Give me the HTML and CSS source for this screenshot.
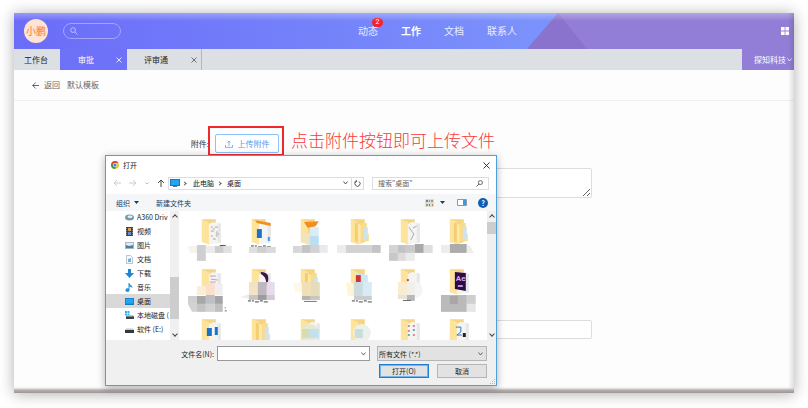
FILE: index.html
```html
<!DOCTYPE html>
<html lang="zh-CN">
<head>
<meta charset="utf-8">
<title>审批</title>
<link rel="stylesheet" href="styles.css">
</head>
<body>
<svg class="defs" aria-hidden="true">
  <defs>
    <g id="folder">
      <path d="M15 3h14v23l-6 2-8-2z" fill="#f5d583"/>
      <path d="M15 3l7 3v23l-7-4z" fill="#fee49b"/>
    </g>
    <g id="paper"><path d="M22 8l4-2 8 1v20l-12 1z" fill="#f4f4f3"/><path d="M31 7l3 1v18l-3 1z" fill="#e5e7e8"/></g>
    <g id="nested"><path d="M19 7h8l1 2v17l-5 1-4-2z" fill="#f3ce74"/><path d="M25 7h6v11h2v7l-8 1z" fill="#f8dc8b"/><path d="M28 11h4v13h-4z" fill="#cfe3ef"/><path d="M22 7l3 2v19l-3-1z" fill="#ffe7a5"/></g>
    <path id="dashes" d="M0 0h3m1 0h2m1 1h4m1-1h3m1 1h4" stroke="#444" fill="none"/>
  </defs>
</svg>

<main class="app">
  <header class="topbar">
    <svg class="topbar-art" viewBox="0 0 267 36" preserveAspectRatio="none" aria-hidden="true"><path d="M0 36L31 0H267V36z" fill="#8a73cc"/><path d="M31 0H267V36H60z" fill="#927ed6"/></svg>
    <span class="avatar">小鹏</span>
    <label class="search" aria-label="搜索">
      <svg width="8" height="8" viewBox="0 0 9 9" fill="none" stroke="#c5c7ff"><circle cx="3.5" cy="3.5" r="2.7"/><path d="M5.5 5.5l3 3"/></svg>
      <input type="search">
    </label>
    <nav class="mainnav">
      <a href="#">动态<span class="badge">2</span></a>
      <a href="#" class="on">工作</a>
      <a href="#">文档</a>
      <a href="#">联系人</a>
    </nav>
    <button class="apps" aria-label="应用"><svg width="8" height="8" viewBox="0 0 8 8" fill="#fff"><path d="M0 0h3.6v3.6H0zM4.4 0H8v3.6H4.4zM0 4.4h3.6V8H0zM4.4 4.4H8V8H4.4z"/></svg></button>
  </header>

  <div class="tabs">
    <a class="tab" href="#">工作台</a>
    <div class="tab current"><a href="#">审批</a><button aria-label="关闭"><svg width="6" height="6" viewBox="0 0 6 6" stroke="#fff" stroke-width=".8"><path d="M.5.5l5 5m0-5l-5 5"/></svg></button></div>
    <div class="tab last"><a href="#">评审通</a><button aria-label="关闭"><svg width="6" height="6" viewBox="0 0 6 6" stroke="#555" stroke-width=".8"><path d="M.5.5l5 5m0-5l-5 5"/></svg></button></div>
    <button class="company">探知科技<svg width="5" height="4" viewBox="0 0 5 4" fill="none" stroke="#fff" stroke-width=".8"><path d="M.5.5l2 2.5 2-2.5"/></svg></button>
  </div>

  <div class="crumbs">
    <a href="#"><svg width="7" height="7" viewBox="0 0 7 7" fill="none" stroke="#555" stroke-width=".9"><path d="M7 3.5H.7M3.7.5l-3 3 3 3"/></svg>返回</a>
    <span>默认模板</span>
  </div>

  <form class="form">
    <label for="upload">附件:</label>
    <div class="upload-row">
      <span class="marked"><button type="button" class="upload" id="upload"><svg width="8" height="8" viewBox="0 0 8 8" fill="none" stroke="#5aa5f5" stroke-width=".8"><path d="M.5 5v2.4h7V5M4 6V1M2.5 2.5L4 1l1.500 1.500"/></svg>上传附件</button></span>
      <span class="note">点击附件按钮即可上传文件</span>
    </div>
    <textarea class="field area" aria-label="说明"></textarea>
    <input class="field line" aria-label="备注">
  </form>

  <section class="dialog" role="dialog" aria-label="打开">
    <div class="titlebar">
      <svg width="8" height="8" viewBox="0 0 16 16"><circle cx="8" cy="8" r="8" fill="#f4c42d"/><path d="M1 4a8 8 0 0 1 14 0H8L4.500 10z" fill="#dd4436"/><path d="M1 4a8 8 0 0 0 6.500 12L11 10H5z" fill="#2f9e54"/><circle cx="8" cy="8" r="4" fill="#fff"/><circle cx="8" cy="8" r="3" fill="#3d7de0"/></svg>
      <span>打开</span>
      <button aria-label="关闭"><svg width="7" height="7" viewBox="0 0 7 7" stroke="#222" stroke-width=".9"><path d="M.5.5l6 6m0-6l-6 6"/></svg></button>
    </div>

    <div class="pathbar">
      <div class="arrows">
        <svg width="8" height="8" viewBox="0 0 8 8" fill="none" stroke="#ccc"><path d="M8 4H1M4 1L1 4l3 3"/></svg>
        <svg width="8" height="8" viewBox="0 0 8 8" fill="none" stroke="#ccc"><path d="M0 4h7M4 1l3 3-3 3"/></svg>
        <svg width="4" height="8" viewBox="0 0 4 8" fill="none" stroke="#bbb"><path d="M.5 3.500L2 5l1.500-1.500"/></svg>
        <svg width="8" height="8" viewBox="0 0 8 8" fill="none" stroke="#444"><path d="M4 8V1M1 4l3-3 3 3"/></svg>
      </div>
      <div class="address">
        <svg width="10" height="8" viewBox="0 0 10 8"><path d="M0 0h10v7H0z" fill="#1179c9"/><path d="M1 1h8v5H1z" fill="#22a6f2"/><path d="M3 7h4v1H3z" fill="#55798f"/></svg>
        <i class="sep"></i><a href="#">此电脑</a><i class="sep"></i><a href="#">桌面</a>
        <svg class="drop" width="5" height="4" viewBox="0 0 5 4" fill="none" stroke="#444" stroke-width=".9"><path d="M.5.5l2 2.500 2-2.500"/></svg>
        <button class="reload" aria-label="刷新"><svg width="7" height="7" viewBox="0 0 7 7" fill="none" stroke="#444" stroke-width=".9"><path d="M5 1.500A2.600 2.600 0 1 1 2 1.500M2.300 0v2H.5"/></svg></button>
      </div>
      <label class="find"><input type="text" placeholder='搜索"桌面"' aria-label="搜索桌面"><svg width="7" height="7" viewBox="0 0 7 7" fill="none" stroke="#444" stroke-width=".8"><circle cx="4.400" cy="2.600" r="2"/><path d="M3 4L.5 6.500"/></svg></label>
    </div>

    <div class="tools">
      <button>组织<svg width="5" height="3" viewBox="0 0 5 3"><path d="M0 0h5L2.500 3z" fill="#1d3a63"/></svg></button>
      <button>新建文件夹</button>
      <div class="tools-right">
        <svg width="9" height="8" viewBox="0 0 9 8"><path d="M0 0h9v8H0z" fill="#dcdcd6"/><path d="M1 1h2v2H1zM4 5h1v2H4z" fill="#6f8295"/><path d="M4 1h1v2H4zM7 5h1v2H7z" fill="#d2864e"/><path d="M6 1h2v2H6zM1 5h2v2H1z" fill="#9aa569"/></svg>
        <svg width="5" height="3" viewBox="0 0 5 3"><path d="M0 0h5L2.500 3z" fill="#1d3a63"/></svg>
        <svg class="pane" width="10" height="7" viewBox="0 0 10 7"><path d="M.5.5h9v6h-9z" fill="#fff" stroke="#8d99a5"/><path d="M6 1h3v5H6z" fill="#379be8"/></svg>
        <button class="help" aria-label="帮助">?</button>
      </div>
    </div>

    <div class="browser">
      <ul class="places">
        <li><svg viewBox="0 0 9 9"><ellipse cx="4.500" cy="4.500" rx="4.500" ry="3" fill="#7a9aac"/><ellipse cx="5" cy="3.800" rx="2.500" ry="1.200" fill="#e6f1f5"/><path d="M4 7l4-2v1z" fill="#3fa4b8"/></svg>A360 Driv</li>
        <li><svg viewBox="0 0 9 9"><path d="M1 0h7v9H1z" fill="#3d4450"/><path d="M3 1h3v3H3z" fill="#d3a256"/><path d="M3 5h3v3H3z" fill="#678dc9"/><path d="M1.500 1v7m6-7v7" stroke="#ccc" stroke-width=".5" stroke-dasharray="1"/></svg>视频</li>
        <li><svg viewBox="0 0 9 9"><path d="M0 1h9v7H0z" fill="#a9b7bf"/><path d="M1 2h7v5H1z" fill="#d9eef9"/><path d="M1 4l3 1 4-1v3H1z" fill="#4b7f9e"/></svg>图片</li>
        <li><svg viewBox="0 0 9 9"><path d="M1.500.5h4l2 2v6h-6z" fill="#f7fafc" stroke="#9db0bd" stroke-width=".7"/><path d="M3 4l3-1v4H3z" fill="#6db3de"/></svg>文档</li>
        <li><svg viewBox="0 0 9 9"><path d="M3 0h3v4h3L4.500 9 0 4h3z" fill="#2384d2"/></svg>下载</li>
        <li><svg viewBox="0 0 9 9"><path d="M3.500 0h1c0 2 3 2 3 5-1-1-2-1.500-3-1.500V7a2 1.800 0 1 1-1-1.500z" fill="#1c8fe0"/></svg>音乐</li>
        <li class="picked"><svg viewBox="0 0 9 9"><path d="M0 1h9v7H0z" fill="#1179c9"/><path d="M.7 1.700h7.600v5H.7z" fill="#22a6f2"/></svg>桌面</li>
        <li><svg viewBox="0 0 9 9"><path d="M0 0h2v2H0zM2.500 0h2v2h-2zM0 2.500h2v2H0zM2.500 2.500h2v2h-2z" fill="#28b4e8"/><path d="M1 5h8v3H1z" fill="#3c4248"/><path d="M2 4h6l1 1.500H1z" fill="#bfc5c9"/></svg>本地磁盘 (</li>
        <li><svg viewBox="0 0 9 9"><path d="M0 5h9v3H0z" fill="#33383c"/><path d="M1 3.500h7L9 5H0z" fill="#c4c8cb"/></svg>软件 (E:)</li>
        <li><svg viewBox="0 0 9 9"><path d="M0 5h9v3H0z" fill="#33383c"/></svg>文档 (F:)</li>
      </ul>
      <div class="scroll side"><i class="up"></i><i class="thumb"></i><i class="down"></i></div>

      <div class="files">
        <svg viewBox="0 0 50 50"><use href="#folder"/><use href="#paper"/><path d="M24 11h2m2 0h3m-7 4h3m2 1h2m-7 4h2m3 0h2" stroke="#d9938a"/><path d="M26 13h2m1 5h3m-6 5h3" stroke="#7fb49a"/><path d="M1 30h9v7H3z" fill="#f7f4ef"/><path d="M10 29h9v16h-9z" fill="#cfcfd3"/><path d="M19 30h9v7h-9z" fill="#ebebeb"/><path d="M28 30h9v7h-9z" fill="#cdcdcd"/><path d="M37 30h8v7h-8z" fill="#e1e1e1"/><path d="M33 29.500h6" stroke="#555"/></svg>
        <svg viewBox="0 0 50 50"><use href="#folder"/><use href="#paper"/><path d="M18 4l16 3v3L20 7z" fill="#f28d21"/><path d="M20 13h5v9h-5z" fill="#1b73c8"/><path d="M31 21h2v4h-2z" fill="#34a1e8"/><use href="#dashes" x="14" y="30"/><path d="M12 31h8v6h-8z" fill="#dfdfdf"/><path d="M20 31h10v6H20z" fill="#cfcfcf"/><path d="M30 31h9v6h-9z" fill="#dadada"/></svg>
        <svg viewBox="0 0 50 50"><use href="#folder"/><path d="M18 6l15-1-3 5-8 2z" fill="#f28d21"/><path d="M24 11h9v9h-9z" fill="#daedf5"/><path d="M24 20h9v9h-9z" fill="#b9dff3"/><path d="M15 17h9v12l-9-3z" fill="#f1e3bd"/><path d="M7 30h9v7H7z" fill="#d7d7d9"/><path d="M16 29h9v8h-9z" fill="#c4c3c5"/><path d="M25 29h9v8h-9z" fill="#d3d3d4"/><path d="M34 29h8v8h-8z" fill="#e9eaee"/></svg>
        <svg viewBox="0 0 50 50"><use href="#folder"/><use href="#nested"/><path d="M1 29h9v8H1z" fill="#ececec"/><path d="M10 29h26v8H10z" fill="#d2d2d2"/><path d="M36 29h9v8h-9z" fill="#c4c4c4"/></svg>
        <svg viewBox="0 0 50 50"><use href="#folder"/><use href="#paper"/><path d="M23 11l5 7-3 6m2-12l4-2" stroke="#aaa" fill="none"/><path d="M3 29h9v8H3z" fill="#d4d2d4"/><path d="M12 29h8v8h-8z" fill="#c2c2c4"/><path d="M20 29h9v8h-9z" fill="#cbcacb"/><path d="M29 28h9v9h-9z" fill="#aaa8aa"/><path d="M38 29h9v8h-9z" fill="#dedede"/><path d="M3 37h9v8H3z" fill="#cbc7c9"/><path d="M12 37h8v8h-8z" fill="#dcdcdd"/><path d="M20 37h9v8h-9z" fill="#ebebec"/></svg>
        <svg viewBox="0 0 50 50"><use href="#folder"/><use href="#nested"/><path d="M6 29h9v8H6z" fill="#ededed"/><path d="M15 28h17v9H15z" fill="#acacac"/><path d="M32 29h3l4 8h-7z" fill="#eee"/></svg>

        <svg viewBox="0 0 50 50"><use href="#folder"/><use href="#paper"/><path d="M23 10h6m-5 3l7 1m-8 2h6" stroke="#c99ac0"/><path d="M10 20h9v9h-9z" fill="#f9efd8"/><path d="M19 17h9v12h-9z" fill="#fadfc9"/><path d="M28 18h8v11h-8z" fill="#f0eeee"/><path d="M1 30h9v8H1z" fill="#cfcfcf"/><path d="M10 30h9v8h-9z" fill="#a9a8a9"/><path d="M19 29h9v9h-9z" fill="#bebec5"/><path d="M28 30h8v8h-8z" fill="#a5a5a7"/><path d="M1 38h9v8H5z" fill="#d2d2d2"/><path d="M10 38h9v8h-9z" fill="#c4c2c4"/><path d="M19 38h9v8h-9z" fill="#d1d1d1"/><path d="M28 38h8v8h-8z" fill="#c0c0c0"/><path d="M38 42h1m-1 3h2" stroke="#666"/></svg>
        <svg viewBox="0 0 50 50"><use href="#folder"/><use href="#paper"/><path d="M24 6c8 0 9 5 6 14-1-7-1-9-6-12z" fill="#3c1747"/><path d="M12 16h9v13h-9z" fill="#f1e3c4"/><path d="M21 16h9v13h-9z" fill="#bfb7bf"/><path d="M30 16h8v13h-8z" fill="#e6dbea"/><path d="M12 29h9v5h-9z" fill="#c9c5bd"/><path d="M21 29h9v5h-9z" fill="#9d9b9f"/><path d="M30 29h8v5h-8z" fill="#d1c9d4"/><use href="#dashes" x="11" y="35"/><path d="M3 31l9-3v5z" fill="#eee"/></svg>
        <svg viewBox="0 0 50 50"><use href="#folder"/><use href="#nested"/><path d="M7 17h9v9H9z" fill="#fff8e5"/><path d="M16 16h9v14h-9z" fill="#efe0b7"/><path d="M25 16h9v14h-9z" fill="#e5dcbd"/><path d="M16 30h9v4h-9z" fill="#b7b4ac"/><path d="M25 30h9v4h-9z" fill="#c9c6bd"/><path d="M18 35.500h13" stroke="#777"/></svg>
        <svg viewBox="0 0 50 50"><use href="#folder"/><path d="M20 7l12 2v18H20z" fill="#cfe7f4"/><path d="M20 9h5v7h-5z" fill="#cf3434"/><path d="M10 17h8v13h-6z" fill="#fff4d4"/><path d="M18 16h9v14h-9z" fill="#cbdadf"/><path d="M27 16h9v14h-9z" fill="#d8eaf3"/><path d="M18 30h18v4H18z" fill="#c9cbce"/><use href="#dashes" x="16" y="35"/></svg>
        <svg viewBox="0 0 50 50"><use href="#folder"/><use href="#paper"/><circle cx="29" cy="24" r="8" fill="#f3f4f3"/><path d="M21 13h2v2h-2z" fill="#cc4747"/><path d="M12 16h9v13h-9z" fill="#faecd0"/><path d="M21 16h8v13h-8z" fill="#f1efec"/><path d="M12 29h9v4h-9z" fill="#e7e2da"/><path d="M21 29h8v6h-8z" fill="#b9b9b9"/><path d="M17 34.500h8" stroke="#666"/></svg>
        <svg viewBox="0 0 50 50"><use href="#folder"/><use href="#paper"/><path d="M20 6l11 1v18l-11-2z" fill="#2c0c42"/><text x="21" y="15" class="ae">Ae</text><path d="M23 19h5v2h-5z" fill="#bb97d8"/><path d="M6 29h26v17H6z" fill="#bababb"/><path d="M15 30h8v8h-8z" fill="#a7a6a8"/><path d="M32 29h9v9h-9z" fill="#cfcfcf"/><path d="M32 38h9v8h-9z" fill="#e7e7e8"/></svg>

        <svg viewBox="0 0 50 50"><use href="#folder"/><use href="#paper"/><path d="M20 12h5v8h-5zM28 11h3v8h-3z" fill="#1b73c8"/></svg>
        <svg viewBox="0 0 50 50"><use href="#folder"/><use href="#nested"/></svg>
        <svg viewBox="0 0 50 50"><use href="#folder"/><use href="#paper"/><circle cx="24" cy="17" r="9" fill="#e7e8d2"/><path d="M16 13h8v9h-8z" fill="#d5dcb6"/><path d="M24 13h9v9h-9z" fill="#c2e1ef"/></svg>
        <svg viewBox="0 0 50 50"><use href="#folder"/><circle cx="26" cy="17" r="9" fill="#eaf0ea"/><path d="M19 13h8v9h-8z" fill="#c7dfd8"/></svg>
        <svg viewBox="0 0 50 50"><use href="#folder"/><use href="#paper"/><path d="M22 10h2m-2 5h2m3-5h2m-2 9h2" stroke="#d88" stroke-width="2"/><path d="M27 14h2m-7 5h2" stroke="#69a7c4" stroke-width="2"/></svg>
        <svg viewBox="0 0 50 50"><use href="#folder"/><use href="#paper"/><path d="M21 11h5v5l-4 3h5" stroke="#3277ca" fill="none"/><path d="M28 17h3v4h-3z" fill="#222"/></svg>
      </div>
      <div class="scroll main"><i class="up"></i><i class="thumb"></i><i class="down"></i></div>
    </div>

    <form class="foot">
      <label for="fname">文件名(N):</label>
      <div class="combo"><input id="fname" type="text"><svg width="5" height="4" viewBox="0 0 5 4" fill="none" stroke="#555" stroke-width=".9"><path d="M.5.5l2 2.500 2-2.500"/></svg></div>
      <div class="combo filter"><select aria-label="文件类型"><option>所有文件 (*.*)</option></select><svg width="5" height="4" viewBox="0 0 5 4" fill="none" stroke="#555" stroke-width=".9"><path d="M.5.5l2 2.500 2-2.500"/></svg></div>
      <div class="actions"><button type="button" class="primary">打开(O)</button><button type="button">取消</button></div>
      <svg class="grip" width="6" height="6" viewBox="0 0 6 6" fill="#bbb"><path d="M4 0h1v1H4zM4 2h1v1H4zM2 2h1v1H2zM4 4h1v1H4zM2 4h1v1H2zM0 4h1v1H0z"/></svg>
    </form>
  </section>
</main>
</body>
</html>
```
FILE: styles.css
```css
* { box-sizing: border-box; }

body {
  margin: 0;
  min-height: 100vh;
  display: flex;
  padding: 13px 14px 15px;
  background: #fff;
  color: #333;
  font: 8px/12px "Noto Sans CJK SC", sans-serif;
}

a { color: inherit; text-decoration: none; }
button, input, select, textarea { font: inherit; color: inherit; margin: 0; }
button { padding: 0; border: 0; background: none; }
svg { display: block; flex: none; }
.defs { position: absolute; width: 0; height: 0; }

.app {
  position: relative;
  flex: 1;
  display: flex;
  flex-direction: column;
  background: #fdfdfd;
  box-shadow: 0 1px 14px rgba(0, 0, 0, .32);
}

/* shaded lower and right edges of the window */
.app::after {
  content: "";
  position: absolute;
  inset: 0;
  pointer-events: none;
  background:
    linear-gradient(to top, #9c9695, #b5b0af 3px, rgba(220, 218, 218, .3) 5px, transparent 7px),
    linear-gradient(to left, rgba(0, 0, 0, .12), transparent 6px),
    linear-gradient(to bottom, rgba(255, 255, 255, .3), transparent 8px);
}

.topbar {
  position: relative;
  display: flex;
  align-items: center;
  height: 36px;
  padding: 0 5px 0 10px;
  background: linear-gradient(to right, #6b6cf8, #7b91fb 66%);
  color: #fff;
}
.topbar > * { position: relative; }
.topbar .topbar-art { position: absolute; right: 0; top: 0; width: 267px; height: 100%; }

.avatar {
  width: 24px;
  height: 24px;
  border-radius: 50%;
  background: #ffe3d3;
  color: #f6773a;
  font-size: 10px;
  line-height: 24px;
  text-align: center;
}

.search {
  display: flex;
  align-items: center;
  width: 58px;
  height: 16px;
  margin-left: 15px;
  padding: 0 6px;
  border: 1px solid #a2a4fb;
  border-radius: 8px;
}
.search input { width: 100%; min-width: 0; border: 0; padding: 0; background: none; outline: 0; }

.mainnav {
  display: flex;
  gap: 23px;
  margin: 0 auto;
  padding-right: 27px;
  font-size: 10px;
  line-height: 14px;
}
.mainnav a { position: relative; color: #e8eaff; }
.mainnav .on { color: #fff; font-weight: 700; }
.badge {
  position: absolute;
  left: 14px;
  top: -6px;
  width: 11px;
  height: 9px;
  border-radius: 5px;
  background: #f5222d;
  color: #fff;
  font: 7px/9px Roboto, sans-serif;
  text-align: center;
}

.tabs { display: flex; height: 21px; background: #dcdfe4; color: #222; }
.tab { display: flex; align-items: center; padding: 0 12px 0 10px; }
.tab.current { width: 67px; justify-content: space-between; padding: 0 5px 0 18px; background: #6d72f8; color: #fff; }
.tab.last { width: 75px; justify-content: space-between; padding: 0 4px 0 17px; border-right: 1px solid #b4b6ba; }
.company {
  display: flex;
  align-items: center;
  gap: 1px;
  margin-left: auto;
  padding: 0 2px 0 12px;
  background: #927ed6;
  color: #fff;
}

.crumbs {
  display: flex;
  align-items: center;
  gap: 7px;
  height: 31px;
  padding: 0 18px;
  border-bottom: 1px solid #f0f0f0;
  color: #666;
}
.crumbs a { display: flex; align-items: center; gap: 5px; }

.form {
  display: grid;
  grid-template-columns: 25% minmax(0, 377px);
  column-gap: 6px;
  padding-top: 33px;
}
.form > label { text-align: right; line-height: 19px; }
.upload-row { display: flex; align-items: center; gap: 12px; white-space: nowrap; }
.marked { position: relative; }
.marked::after {
  content: "";
  position: absolute;
  inset: -8px -5px -3px -7px;
  border: 2px solid #f0282d;
  pointer-events: none;
}
.upload {
  display: flex;
  align-items: center;
  justify-content: center;
  gap: 5px;
  width: 64px;
  height: 19px;
  border: 1px solid #8ac2fb;
  border-radius: 2px;
  background: #fff;
  color: #4a9cf3;
}
.note { padding-bottom: 8px; color: #fa3a38; font-size: 17px; font-weight: 300; line-height: 19px; }
.upload-row { height: 19px; }
.field { grid-column: 2; width: 100%; border: 1px solid #ddd; border-radius: 2px; background: #fff; }
.area { display: block; height: 30px; margin-top: 15px; }
.line { height: 19px; margin-top: 122px; }

/* file picker floating over the page */
.dialog {
  position: absolute;
  left: 91px;
  top: 142px;
  z-index: 1;
  width: 392px;
  border: 1px solid #4f9fdc;
  background: #fff;
  color: #222;
  font-size: 7px;
  line-height: 10px;
  box-shadow: 0 2px 8px rgba(0, 0, 0, .3);
}
.titlebar { display: flex; align-items: center; gap: 4px; height: 18px; padding: 0 6px 0 5px; }
.titlebar button { margin-left: auto; }

.pathbar { display: flex; align-items: center; gap: 8px; height: 20px; padding: 0 7px 2px; }
.arrows { display: flex; gap: 8px; width: 47px; }
.address { display: flex; align-items: center; flex: 1; height: 13px; padding-left: 1px; border: 1px solid #ddd; }
.sep { width: 3px; height: 3px; margin: 0 7px 0 3px; border: solid #555; border-width: 1px 1px 0 0; transform: rotate(45deg); }
.address a + .sep { margin: 0 6px 0 4px; }
.drop { margin-left: auto; }
.reload { display: flex; align-items: center; height: 11px; margin-left: 3px; padding: 0 2px; border-left: 1px solid #ddd; }
.find { display: flex; align-items: center; width: 117px; height: 13px; padding: 0 5px; border: 1px solid #ddd; }
.find input { flex: 1; min-width: 0; padding: 0; border: 0; outline: 0; }
.find input::placeholder { color: #666; }

.tools {
  display: flex;
  align-items: center;
  gap: 17px;
  height: 17px;
  padding: 0 8px 0 10px;
  background: #f5f6f8;
  color: #1d3a63;
}
.tools button { display: flex; align-items: center; gap: 4px; }
.tools-right { display: flex; align-items: center; gap: 6px; margin-left: auto; }
.pane { margin: 0 5px 0 6px; }
.tools .help { justify-content: center; width: 10px; height: 10px; border-radius: 50%; background: #0e5db5; color: #fff; font-weight: 700; }

.browser { display: flex; height: 129px; overflow: hidden; }
.places { width: 64px; margin: -1px 0 0; padding: 0; list-style: none; white-space: nowrap; }
.places li { display: flex; align-items: center; gap: 3px; height: 14px; padding-left: 19px; }
.places svg { width: 9px; height: 9px; }
.places .picked { background: #d9d9d9; }

.scroll { display: flex; flex-direction: column; align-items: center; width: 9px; background: #f0f0f0; }
.scroll .up, .scroll .down { width: 4px; height: 4px; margin: 4px 0 3px; border: solid #444; border-width: 1px 0 0 1px; transform: rotate(45deg); }
.scroll .down { margin: auto 0 4px; transform: rotate(225deg); }
.thumb { width: 9px; background: #cdcdcd; }
.side .thumb { height: 42px; margin-top: 55px; }
.main .thumb { height: 12px; }

.files {
  flex: 1;
  display: grid;
  grid-template-columns: repeat(6, 1fr);
  grid-auto-rows: 50px;
  padding: 5px 2px 0 8px;
}
.files svg { width: 100%; height: 50px; }
.ae { fill: #d6a5f5; font: 700 8px Roboto, sans-serif; }

.foot {
  position: relative;
  display: grid;
  grid-template-columns: 108px 1fr 110px;
  gap: 3px 7px;
  align-items: center;
  padding: 6px 9px 7px 0;
  background: #f0f0f0;
}
.foot > label { text-align: right; }
.combo { display: flex; align-items: center; height: 15px; margin-left: -4px; padding: 0 3px; border: 1px solid #999; background: #fff; }
.combo input, .combo select { flex: 1; min-width: 0; padding: 0; border: 0; outline: 0; background: none; appearance: none; }
.filter { margin-left: 0; padding-left: 1px; border-color: #b5b5b5; background: #e2e2e2; }
.actions { grid-column: 1 / -1; display: flex; justify-content: flex-end; gap: 8px; }
.actions button { width: 50px; height: 14px; border: 1px solid #b5b5b5; background: #e2e2e2; }
.actions .primary { border-color: #1b7fd6; box-shadow: inset 0 0 0 1px #72b4ec; }
.grip { position: absolute; right: 0; bottom: 0; }
```
